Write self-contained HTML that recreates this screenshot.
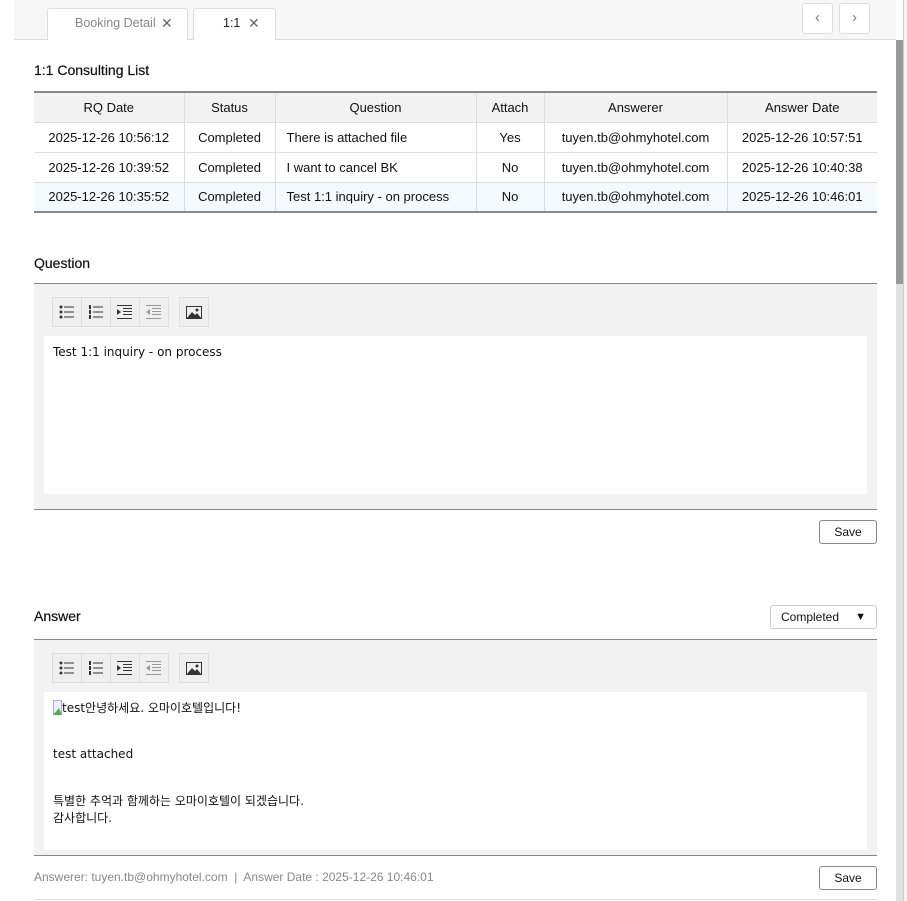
<!DOCTYPE html>
<html><head><meta charset="utf-8">
<style>
*{box-sizing:border-box;margin:0;padding:0}
body{width:907px;height:901px;overflow:hidden;background:#fff;font-family:"Liberation Sans","Noto Sans CJK KR",sans-serif;font-size:13px;color:#111;position:relative}
.topbar{position:absolute;left:14px;top:0;width:882px;height:40px;background:#f7f7f7;border-bottom:1px solid #ddd}
.tab{position:absolute;top:8px;height:32px;background:#fff;border:1px solid #ddd;border-bottom:none;border-radius:3px 3px 0 0;font-size:12.5px;line-height:28px;color:#888}
.tab .x{position:absolute;top:0;font-size:14px;color:#666}
.nav{position:absolute;top:3px;width:31px;height:31px;border:1px solid #ddd;border-radius:3px;background:#fff;text-align:center;line-height:28px;color:#777;font-size:15px}
.sb{position:absolute;left:896px;top:40px;width:7px;height:861px;background:#e2e2e2}
.sbt{position:absolute;left:896px;top:40px;width:7px;height:244px;background:#999}
.edge{position:absolute;left:903px;top:0;width:4px;height:901px;background:#f4f4f4;border-left:1px solid #ccc}
h3{position:absolute;font-size:14px;font-weight:normal;color:#111;-webkit-text-stroke:0.2px #111}
table{position:absolute;left:34px;top:91px;width:843px;border-collapse:collapse;border-top:2px solid #888;border-bottom:2px solid #888}
td,th{border-left:1px solid #ddd;border-bottom:1px solid #ddd;height:30px;text-align:center;font-size:13px;font-weight:normal}
th{background:#f2f2f2;height:30px}
tr td:first-child,tr th:first-child{border-left:none}
td.l{text-align:left;padding-left:11px}
tr.sel td{background:#f3f9fd}
.ed{position:absolute;left:34px;width:843px;background:#f2f2f2;border-top:1px solid #888;border-bottom:1px solid #888}
.tb{position:absolute;left:19px;top:13px;height:30px;display:flex}
.btn{width:30px;height:30px;border:1px solid #ddd;background:#efefef;margin-left:-1px;display:flex;align-items:center;justify-content:center}
.btn.img{margin-left:10px}
.area{position:absolute;left:10px;right:10px;background:#fff;font-family:"DejaVu Sans","Noto Sans CJK KR",sans-serif;font-size:12px;padding:8px 9px;line-height:17px;color:#111}
.save{position:absolute;left:819px;width:58px;height:24px;border:1px solid #888;border-radius:3px;background:#fff;text-align:center;line-height:22px;font-size:12px}
</style></head><body>
<div class="topbar">
 <div class="tab" style="left:33px;width:141px"><span style="position:absolute;left:27px">Booking Detail</span><span class="x" style="left:113px">✕</span></div>
 <div class="tab" style="left:179px;width:83px;color:#222"><span style="position:absolute;left:29px">1:1</span><span class="x" style="left:54px">✕</span></div>
 <div class="nav" style="left:788px">‹</div>
 <div class="nav" style="left:825px">›</div>
</div>
<div class="sb"></div><div class="sbt"></div><div class="edge"></div>

<h3 style="left:34px;top:62px">1:1 Consulting List</h3>
<table>
<tr><th style="width:150px">RQ Date</th><th style="width:91px">Status</th><th style="width:201px">Question</th><th style="width:68px">Attach</th><th style="width:183px">Answerer</th><th>Answer Date</th></tr>
<tr><td>2025-12-26 10:56:12</td><td>Completed</td><td class="l">There is attached file</td><td>Yes</td><td>tuyen.tb@ohmyhotel.com</td><td>2025-12-26 10:57:51</td></tr>
<tr><td>2025-12-26 10:39:52</td><td>Completed</td><td class="l">I want to cancel BK</td><td>No</td><td>tuyen.tb@ohmyhotel.com</td><td>2025-12-26 10:40:38</td></tr>
<tr class="sel"><td>2025-12-26 10:35:52</td><td>Completed</td><td class="l">Test 1:1 inquiry - on process</td><td>No</td><td>tuyen.tb@ohmyhotel.com</td><td>2025-12-26 10:46:01</td></tr>
</table>

<h3 style="left:34px;top:255px">Question</h3>
<div class="ed" style="top:283px;height:227px">
 <div class="tb">
  <div class="btn"><svg width="16" height="14"><g fill="#333"><circle cx="2" cy="2" r="1.5"/><circle cx="2" cy="7" r="1.5"/><circle cx="2" cy="12" r="1.5"/><rect x="5" y="1.5" width="10" height="1"/><rect x="5" y="6.5" width="10" height="1"/><rect x="5" y="11.5" width="10" height="1"/></g></svg></div>
  <div class="btn"><svg width="16" height="14"><g fill="#333"><rect x="1" y="0" width="2" height="4"/><rect x="1" y="5" width="2" height="4"/><rect x="1" y="10" width="2" height="4"/><rect x="5" y="1.5" width="10" height="1"/><rect x="5" y="6.5" width="10" height="1"/><rect x="5" y="11.5" width="10" height="1"/></g></svg></div>
  <div class="btn"><svg width="16" height="14"><g fill="#333"><rect x="0" y="0" width="15" height="1"/><polygon points="0,4 4,7 0,10"/><rect x="6" y="3" width="9" height="1"/><rect x="6" y="6" width="9" height="1"/><rect x="6" y="9" width="9" height="1"/><rect x="0" y="13" width="15" height="1"/></g></svg></div>
  <div class="btn"><svg width="16" height="14"><g fill="#999"><rect x="0" y="0" width="15" height="1"/><polygon points="4,4 0,7 4,10"/><rect x="6" y="3" width="9" height="1"/><rect x="6" y="6" width="9" height="1"/><rect x="6" y="9" width="9" height="1"/><rect x="0" y="13" width="15" height="1"/></g></svg></div>
  <div class="btn img"><svg width="16" height="13"><rect x="0.5" y="0.5" width="15" height="12" fill="none" stroke="#333"/><polygon points="1,12 6,6 9,9 11,7 15,12" fill="#333"/><circle cx="11" cy="4" r="1.5" fill="#333"/></svg></div>
 </div>
 <div class="area" style="top:52px;height:158px">Test 1:1 inquiry - on process</div>
</div>
<div class="save" style="top:520px">Save</div>

<h3 style="left:34px;top:608px">Answer</h3>
<div style="position:absolute;left:770px;top:605px;width:107px;height:24px;border:1px solid #ccc;border-radius:3px;font-size:12px;line-height:22px;padding-left:10px">Completed<span style="position:absolute;right:10px;top:0;font-size:11px">▼</span></div>
<div class="ed" style="top:639px;height:217px">
 <div class="tb">
  <div class="btn"><svg width="16" height="14"><g fill="#333"><circle cx="2" cy="2" r="1.5"/><circle cx="2" cy="7" r="1.5"/><circle cx="2" cy="12" r="1.5"/><rect x="5" y="1.5" width="10" height="1"/><rect x="5" y="6.5" width="10" height="1"/><rect x="5" y="11.5" width="10" height="1"/></g></svg></div>
  <div class="btn"><svg width="16" height="14"><g fill="#333"><rect x="1" y="0" width="2" height="4"/><rect x="1" y="5" width="2" height="4"/><rect x="1" y="10" width="2" height="4"/><rect x="5" y="1.5" width="10" height="1"/><rect x="5" y="6.5" width="10" height="1"/><rect x="5" y="11.5" width="10" height="1"/></g></svg></div>
  <div class="btn"><svg width="16" height="14"><g fill="#333"><rect x="0" y="0" width="15" height="1"/><polygon points="0,4 4,7 0,10"/><rect x="6" y="3" width="9" height="1"/><rect x="6" y="6" width="9" height="1"/><rect x="6" y="9" width="9" height="1"/><rect x="0" y="13" width="15" height="1"/></g></svg></div>
  <div class="btn"><svg width="16" height="14"><g fill="#999"><rect x="0" y="0" width="15" height="1"/><polygon points="4,4 0,7 4,10"/><rect x="6" y="3" width="9" height="1"/><rect x="6" y="6" width="9" height="1"/><rect x="6" y="9" width="9" height="1"/><rect x="0" y="13" width="15" height="1"/></g></svg></div>
  <div class="btn img"><svg width="16" height="13"><rect x="0.5" y="0.5" width="15" height="12" fill="none" stroke="#333"/><polygon points="1,12 6,6 9,9 11,7 15,12" fill="#333"/><circle cx="11" cy="4" r="1.5" fill="#333"/></svg></div>
 </div>
 <div class="area" style="top:52px;height:158px">
  <div><svg width="9" height="15" style="vertical-align:-3px"><rect x="0.5" y="0.5" width="8" height="14" fill="#eef" stroke="#aac"/><polygon points="0,15 6,8 9,15" fill="#5a5"/></svg>test안녕하세요. 오마이호텔입니다!</div>
  <div style="margin-top:29px">test attached</div>
  <div style="margin-top:30px">특별한 추억과 함께하는 오마이호텔이 되겠습니다.<br>감사합니다.</div>
 </div>
</div>
<div style="position:absolute;left:34px;top:870px;font-size:12px;color:#888">Answerer: tuyen.tb@ohmyhotel.com &nbsp;|&nbsp; Answer Date : 2025-12-26 10:46:01</div>
<div class="save" style="top:866px">Save</div>
<div style="position:absolute;left:34px;top:899px;width:843px;height:1px;background:#ddd"></div>
</body></html>
